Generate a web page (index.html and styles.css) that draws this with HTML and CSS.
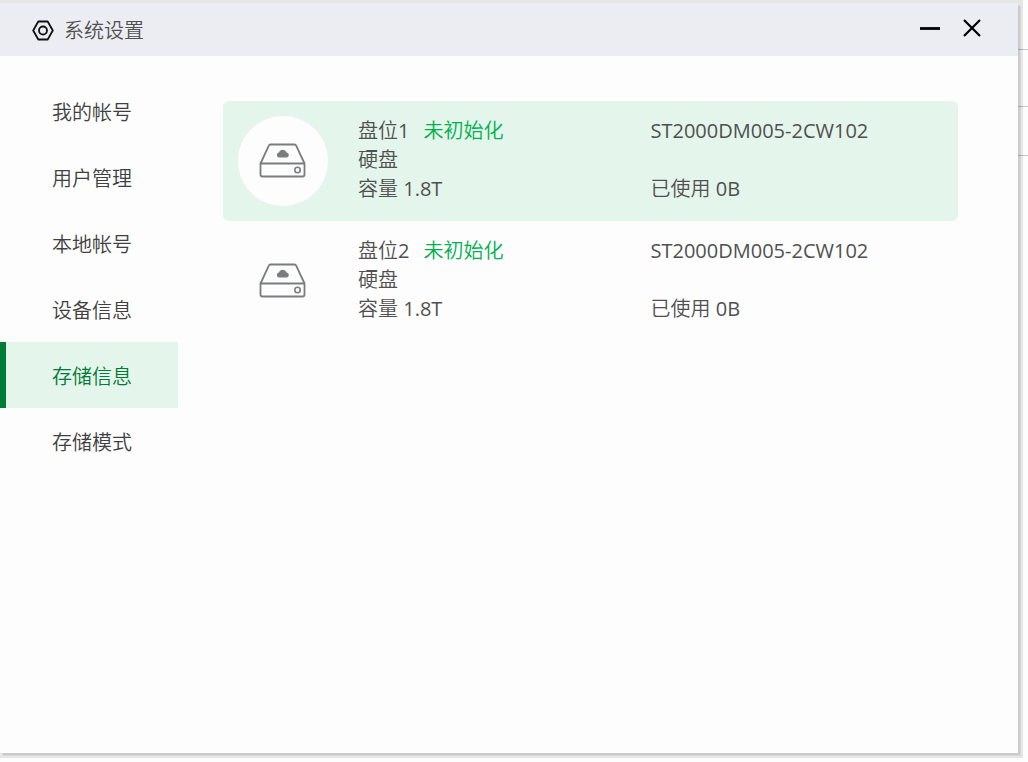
FILE: index.html
```html
<!DOCTYPE html>
<html lang="zh-CN">

<head>
    <meta charset="UTF-8">
    <meta name="viewport" content="width=device-width, initial-scale=1.0">
    <title>系统设置</title>
    <link rel="stylesheet" href="styles.css">
</head>

<body>
    <!-- shared icon -->
    <svg class="defs" aria-hidden="true">
        <symbol id="disk" viewBox="0 0 48 36">
            <path d="M1.500 20.500 9.700 2.800Q10.200 1.500 11.500 1.500H35.500Q36.800 1.500 37.300 2.800L45.500 20.500V31.500Q45.500 33.500 43.500 33.500H3.500Q1.500 33.500 1.500 31.500ZM1.500 20.500H45.500" fill="none" stroke="#7b7c7f" stroke-width="1.800" stroke-linejoin="round"/>
            <circle cx="38.500" cy="27" r="2.700" fill="none" stroke="#7b7c7f" stroke-width="1.600"/>
            <path d="M20 14.500a2.500 2.500 0 0 1-.8-4.700 2.500 2.500 0 0 1 .8-.2 4 4 0 0 1 7.600 0 2.500 2.500 0 0 1 .8.200 2.500 2.500 0 0 1-.8 4.700Z" fill="#7b7c7f"/>
        </symbol>
    </svg>

    <div class="window">
        <header class="titlebar">
            <svg class="logo" viewBox="0 0 22 22" aria-hidden="true">
                <path d="M6.300 2.500H15.700L20.800 11.500 15.700 20.500H6.300L1.200 11.500Z" fill="none" stroke="#111" stroke-width="1.800" stroke-linejoin="round"/>
                <circle cx="11" cy="11.500" r="4" fill="none" stroke="#111" stroke-width="1.800"/>
            </svg>
            <h1>系统设置</h1>
            <div class="win-btns">
                <button aria-label="最小化">
                    <svg viewBox="0 0 20 20"><path d="M0 10.500H20" stroke="#000" stroke-width="2.800"/></svg>
                </button>
                <button aria-label="关闭">
                    <svg viewBox="0 0 20 20"><path d="M2 2 18 18M18 2 2 18" stroke="#000" stroke-width="2.200"/></svg>
                </button>
            </div>
        </header>

        <div class="content">
            <nav class="sidebar">
                <a href="#account">我的帐号</a>
                <a href="#users">用户管理</a>
                <a href="#local">本地帐号</a>
                <a href="#device">设备信息</a>
                <a href="#storage" class="active">存储信息</a>
                <a href="#mode">存储模式</a>
            </nav>

            <main class="disks">
                <section class="disk selected">
                    <div class="disk-icon"><svg><use href="#disk"/></svg></div>
                    <div class="disk-info">
                        <div>盘位<span class="value">1</span><span class="status">未初始化</span></div>
                        <div class="value">ST2000DM005-2CW102</div>
                        <div class="type">硬盘</div>
                        <div>容量 <span class="value">1.8T</span></div>
                        <div>已使用 <span class="value">0B</span></div>
                    </div>
                </section>
                <section class="disk">
                    <div class="disk-icon"><svg><use href="#disk"/></svg></div>
                    <div class="disk-info">
                        <div>盘位<span class="value">2</span><span class="status">未初始化</span></div>
                        <div class="value">ST2000DM005-2CW102</div>
                        <div class="type">硬盘</div>
                        <div>容量 <span class="value">1.8T</span></div>
                        <div>已使用 <span class="value">0B</span></div>
                    </div>
                </section>
            </main>
        </div>
    </div>
</body>

</html>
```
FILE: styles.css
```css
* {
    box-sizing: border-box;
}

body {
    display: flex;
    min-height: 100vh;
    margin: 0;
    padding: 3px 10px 9px 0;
    overflow-x: hidden;
    font-family: "Open Sans", "Noto Sans CJK SC", sans-serif;
    font-size: 20px;
    font-weight: 350;
    color: #505050;
    /* lines of the list behind the window */
    background:
        linear-gradient(#c8c8c8, #c8c8c8) 0 49px / 100% 1px no-repeat,
        linear-gradient(#c8c8c8, #c8c8c8) 0 106px / 100% 1px no-repeat,
        linear-gradient(#c8c8c8, #c8c8c8) 0 155px / 100% 1px no-repeat,
        #fdfdfd;
}

.defs {
    position: absolute;
    width: 0;
    height: 0;
}

.window {
    flex: 1;
    background-color: #fdfdfd;
    box-shadow:
        2px 2px 0 rgba(0, 0, 0, 0.06),
        3px 3px 0 rgba(0, 0, 0, 0.06),
        1px 1px 0 4px rgba(0, 0, 0, 0.09);
}

.titlebar {
    display: flex;
    align-items: center;
    height: 53px;
    padding: 0 36px 0 32px;
    background-color: #ecedf3;
}

.titlebar h1 {
    flex: 1;
    margin: 0;
    font-size: 20px;
    font-weight: 350;
}

.logo {
    width: 22px;
    height: 22px;
    margin-right: 10px;
}

.win-btns {
    display: flex;
    gap: 22px;
    padding-bottom: 3px;
}

.win-btns button {
    display: flex;
    padding: 0;
    border: none;
    background: none;
    cursor: pointer;
}

.win-btns svg {
    width: 20px;
    height: 20px;
}

.content {
    display: flex;
}

.sidebar {
    width: 178px;
    padding-top: 22px;
}

.sidebar a {
    display: block;
    padding: 3px 0 0 46px;
    border-left: 6px solid transparent;
    line-height: 63px;
    color: #404040;
    text-decoration: none;
}

.sidebar a.active {
    border-left-color: #007a37;
    background-color: #e4f5eb;
    color: #007a37;
}

.disks {
    flex: 1;
    padding: 45px 60px 0 45px;
}

.disk {
    display: flex;
    align-items: center;
    gap: 30px;
    padding: 15px;
    border-radius: 6px;
}

.disk.selected {
    background-color: #e4f5eb;
}

.disk-icon {
    display: flex;
    align-items: center;
    justify-content: center;
    width: 90px;
    height: 90px;
    border-radius: 50%;
    background-color: #fdfdfd;
}

.disk-icon svg {
    width: 48px;
    height: 36px;
}

.disk-info {
    flex: 1;
    display: grid;
    grid-template-columns: 1fr 1fr;
    padding-bottom: 3px;
    line-height: 29px;
}

.value {
    font-weight: 400;
}

.type {
    grid-column: 1 / 3;
}

.status {
    margin-left: 14px;
    color: #00b050;
}
```
